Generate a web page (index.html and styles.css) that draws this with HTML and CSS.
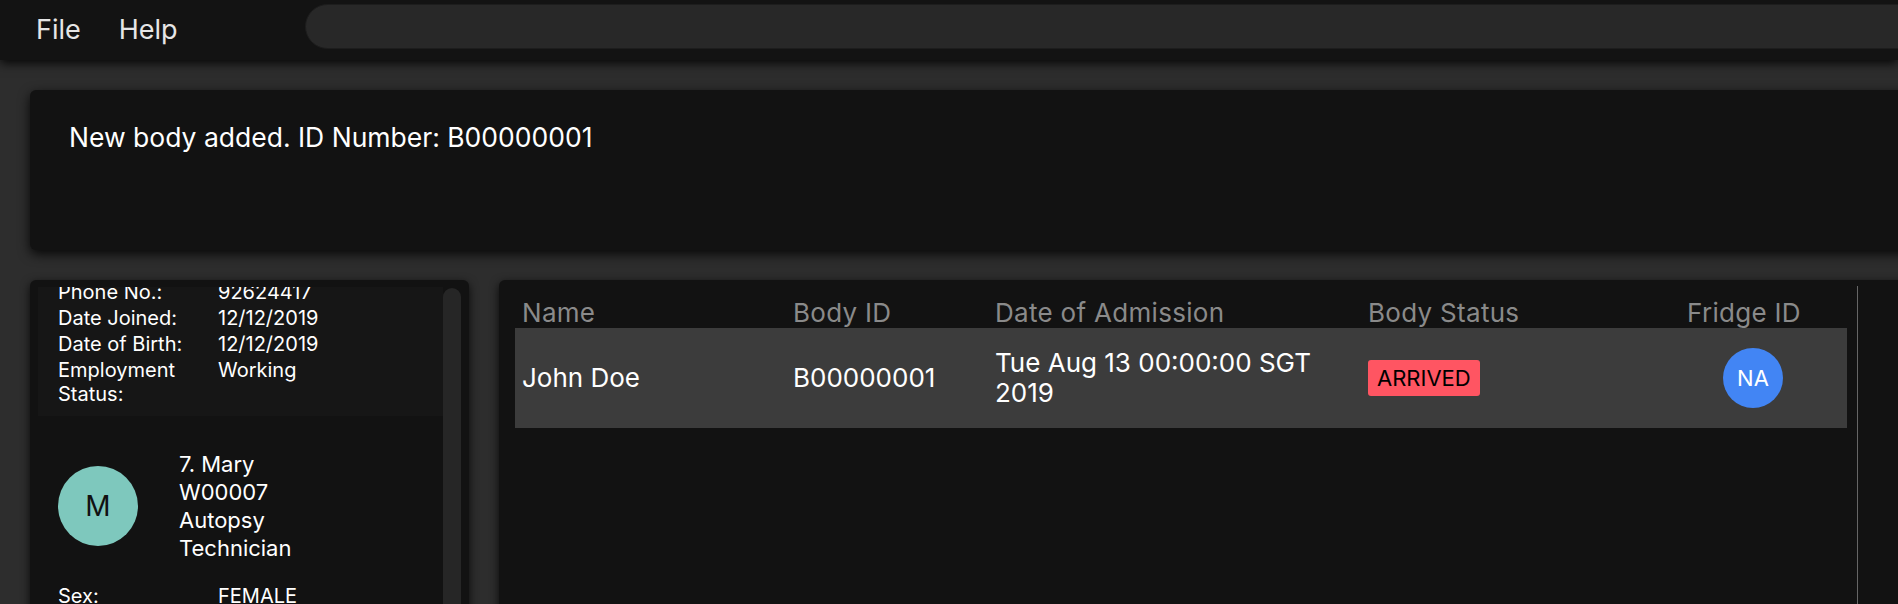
FILE: index.html
```html
<!DOCTYPE html>
<html lang="en">
<head>
<meta charset="utf-8">
<title>Mortago</title>
<link rel="stylesheet" href="styles.css">
</head>
<body>
  <div class="menubar">
    <span class="menu-item">File</span>
    <span class="menu-item">Help</span>
    <div class="search"></div>
  </div>

  <div class="main">
    <div class="result">New body added. ID Number: B00000001</div>

    <div class="panels">
      <div class="left-panel">
        <div class="list">
          <div class="card card-odd">
            <div class="details">
              <span class="label">Phone No.:</span><span class="value">92624417</span>
              <span class="label">Date Joined:</span><span class="value">12/12/2019</span>
              <span class="label">Date of Birth:</span><span class="value">12/12/2019</span>
              <span class="label">Employment Status:</span><span class="value">Working</span>
            </div>
          </div>
          <div class="card">
            <div class="card-head">
              <div class="avatar">M</div>
              <div class="names">
                <div>7. Mary</div>
                <div>W00007</div>
                <div>Autopsy</div>
                <div>Technician</div>
              </div>
            </div>
            <div class="details">
              <span class="label">Sex:</span><span class="value">FEMALE</span>
            </div>
          </div>
        </div>
        <div class="scrollbar"></div>
      </div>

      <div class="right-panel">
        <div class="table">
          <div class="thead">
            <div class="cell c-name">Name</div>
            <div class="cell c-id">Body ID</div>
            <div class="cell c-date">Date of Admission</div>
            <div class="cell c-status">Body Status</div>
            <div class="cell c-fridge">Fridge ID</div>
          </div>
          <div class="trow">
            <div class="cell c-name">John Doe</div>
            <div class="cell c-id">B00000001</div>
            <div class="cell c-date">Tue Aug 13 00:00:00 SGT 2019</div>
            <div class="cell c-status"><span class="badge">ARRIVED</span></div>
            <div class="cell c-fridge"><span class="fridge">NA</span></div>
          </div>
        </div>
        <div class="vline"></div>
      </div>
    </div>
  </div>
</body>
</html>
```

FILE: styles.css
```css
* { box-sizing: border-box; }

html, body {
  margin: 0;
  height: 604px;
  overflow: hidden;
}

body {
  background: #2d2d2d;
  font-family: Inter, "Liberation Sans", sans-serif;
  color: #ffffff;
}

/* ---------- menu bar ---------- */
.menubar {
  position: relative;
  z-index: 3;
  height: 60px;
  display: flex;
  align-items: center;
  background: #131313;
  box-shadow: 0 3px 10px rgba(0, 0, 0, 0.9);
}

.menu-item {
  font-size: 27px;
  line-height: 32px;
  color: #e6e6e6;
}

.menu-item:first-child { margin-left: 36px; }
.menu-item + .menu-item { margin-left: 38px; }

.search {
  align-self: flex-start;
  margin-top: 4px;
  margin-left: 127px;
  margin-right: -60px;
  flex: 1;
  height: 45px;
  border-radius: 23px;
  background: #282828;
  border: 1px solid #1d1d1d;
}

/* ---------- main ---------- */
.main {
  padding: 30px 0 0 30px;
}

.result {
  position: relative;
  z-index: 2;
  height: 160px;
  margin-right: -30px;
  padding: 31px 39px;
  background: #121212;
  border-radius: 6px;
  font-size: 26.5px;
  line-height: 32px;
  color: #ffffff;
  box-shadow: 0 4px 12px rgba(0, 0, 0, 0.85);
}

.panels {
  display: flex;
  gap: 30px;
  margin-top: 30px;
  height: 360px;
}

/* ---------- left panel ---------- */
.left-panel {
  width: 439px;
  flex: none;
  display: flex;
  padding: 7px 8px 0 8px;
  background: #121212;
  border-radius: 6px;
  box-shadow: 0 3px 10px rgba(0, 0, 0, 0.8);
}

.list {
  width: 405px;
  overflow: hidden;
}

.card {
  padding: 34px 20px 0 20px;
  background: #121212;
}

.card-odd {
  background: #161616;
  margin-top: -7px;
  padding: 0 20px 10px 20px;
}

.details {
  display: grid;
  grid-template-columns: 150px 1fr;
  column-gap: 10px;
  row-gap: 2px;
  font-size: 20px;
  line-height: 24px;
  color: #ffffff;
}

.card-head {
  display: flex;
  align-items: center;
  gap: 41px;
  margin-bottom: 22px;
}

.avatar {
  width: 80px;
  height: 80px;
  flex: none;
  border-radius: 50%;
  background: #7ec8bd;
  color: #111111;
  font-size: 28px;
  display: flex;
  align-items: center;
  justify-content: center;
}

.names {
  font-size: 22px;
  line-height: 28px;
  color: #ffffff;
}

.scrollbar {
  width: 18px;
  flex: none;
  margin-top: 1px;
  background: #262626;
  border-radius: 9px 9px 0 0;
}

/* ---------- right panel ---------- */
.right-panel {
  flex: 1;
  margin-right: -30px;
  display: flex;
  padding: 6px 0 0 16px;
  background: #121212;
  border-radius: 6px;
  box-shadow: 0 3px 10px rgba(0, 0, 0, 0.8);
}

.table {
  width: 1332px;
  flex: none;
}

.thead {
  display: flex;
  align-items: flex-end;
  height: 42px;
  font-size: 26px;
  letter-spacing: 0.3px;
  line-height: 30px;
  color: #8a8a8a;
}

.trow {
  display: flex;
  align-items: center;
  height: 100px;
  background: #3c3c3c;
  font-size: 26px;
  line-height: 30px;
  color: #ffffff;
}

.cell { padding-left: 7px; }

.c-name { width: 271px; }
.c-id { width: 202px; }
.c-date { width: 373px; padding-right: 10px; }
.c-status { width: 319px; }
.c-fridge { width: 167px; }

.badge {
  display: inline-block;
  height: 36px;
  padding: 0 9px;
  border-radius: 3px;
  background: #ff5562;
  color: #000000;
  font-size: 22px;
  line-height: 36px;
}

.trow .c-fridge { padding-left: 43px; }

.fridge {
  display: flex;
  align-items: center;
  justify-content: center;
  width: 60px;
  height: 60px;
  border-radius: 50%;
  background: #4285f4;
  color: #ffffff;
  font-size: 22px;
}

.vline {
  width: 1px;
  margin-left: 10px;
  background: #666666;
}
```
